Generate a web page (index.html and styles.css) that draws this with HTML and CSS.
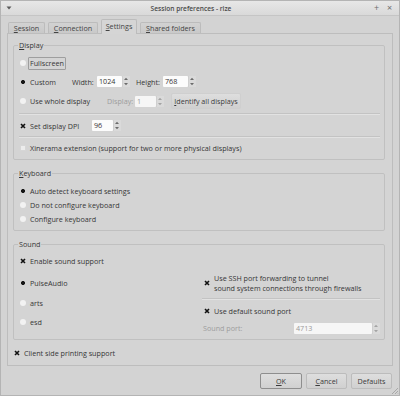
FILE: index.html
```html
<!DOCTYPE html>
<html>
<head>
    <meta charset="utf-8">
    <title>Session preferences - rize</title>
    <link rel="stylesheet" href="styles.css">
</head>
<body>
<div class="window">
    <div class="titlebar">
        <svg class="menu-btn" width="6" height="4" viewBox="0 0 6 4"><path d="M0.5 0.5H5.5L3 3.5Z" fill="#5a5a5a"/></svg>
        <span class="title">Session preferences - rize</span>
        <span class="wm-btn">+</span>
        <span class="wm-btn">×</span>
    </div>

    <div class="tabs">
        <span class="tab w37"><u>S</u>ession</span>
        <span class="tab w50"><u>C</u>onnection</span>
        <span class="tab active w36"><u>S</u>ettings</span>
        <span class="tab w61"><u>S</u>hared folders</span>
    </div>

    <div class="pane">
        <!-- 显示 -->
        <fieldset class="group display">
            <legend><u>D</u>isplay</legend>
            <div class="row h14">
                <span class="radio"></span><span class="focus">Fullscreen</span>
            </div>
            <div class="row h15">
                <span class="cell w52"><span class="radio on"></span>Custom</span>
                <span class="lbl w25">Width:</span>
                <span class="spin w33"><span class="spin-field">1024</span><span class="arrows"><svg width="8" height="11" viewBox="0 0 8 11"><path d="M2 4H6L4 1.8Z M2 7H6L4 9.2Z" fill="#6c6c6c"/></svg></span></span>
                <span class="lbl w27 ml6">Height:</span>
                <span class="spin w33"><span class="spin-field">768</span><span class="arrows"><svg width="8" height="11" viewBox="0 0 8 11"><path d="M2 4H6L4 1.8Z M2 7H6L4 9.2Z" fill="#6c6c6c"/></svg></span></span>
            </div>
            <div class="row h16">
                <span class="cell w87"><span class="radio"></span>Use whole display</span>
                <span class="lbl w28 off">Display:</span>
                <span class="spin w29 off"><span class="spin-field">1</span><span class="arrows"><svg width="8" height="11" viewBox="0 0 8 11"><path d="M2 4H6L4 1.8Z M2 7H6L4 9.2Z" fill="#a4a4a4"/></svg></span></span>
                <span class="button identify"><u>I</u>dentify all displays</span>
            </div>
            <div class="sep"></div>
            <div class="row h13">
                <span class="cell w72"><svg class="tick" width="6" height="6" viewBox="0 0 6 6"><path d="M1 1L5 5M5 1L1 5" stroke="#111" stroke-width="1.6"/></svg>Set display DPI</span>
                <span class="spin w29"><span class="spin-field">96</span><span class="arrows"><svg width="8" height="11" viewBox="0 0 8 11"><path d="M2 4H6L4 1.8Z M2 7H6L4 9.2Z" fill="#6c6c6c"/></svg></span></span>
            </div>
            <div class="sep"></div>
            <div class="row h12">
                <span class="box"></span>Xinerama extension (support for two or more physical displays)
            </div>
        </fieldset>

        <!-- 键盘 -->
        <fieldset class="group keyboard">
            <legend><u>K</u>eyboard</legend>
            <div class="row h12"><span class="radio on"></span>Auto detect keyboard settings</div>
            <div class="row h12"><span class="radio"></span>Do not configure keyboard</div>
            <div class="row h12"><span class="radio"></span>Configure keyboard</div>
        </fieldset>

        <!-- 声音 -->
        <fieldset class="group sound">
            <legend>Sound</legend>
            <div class="sound-body">
                <div class="sound-left">
                    <div class="row h12"><svg class="tick" width="6" height="6" viewBox="0 0 6 6"><path d="M1 1L5 5M5 1L1 5" stroke="#111" stroke-width="1.6"/></svg>Enable sound support</div>
                    <div class="row h12 mt10"><span class="radio on"></span>PulseAudio</div>
                    <div class="row h12 mt8"><span class="radio"></span>arts</div>
                    <div class="row h12 mt7"><span class="radio"></span>esd</div>
                </div>
                <div class="sound-right">
                    <div class="row indent"><svg class="tick" width="6" height="6" viewBox="0 0 6 6"><path d="M1 1L5 5M5 1L1 5" stroke="#111" stroke-width="1.6"/></svg><span class="two-lines">Use SSH port forwarding to tunnel<br>sound system connections through firewalls</span></div>
                    <div class="sep mt5"></div>
                    <div class="row h12 mt5 indent"><svg class="tick" width="6" height="6" viewBox="0 0 6 6"><path d="M1 1L5 5M5 1L1 5" stroke="#111" stroke-width="1.6"/></svg>Use default sound port</div>
                    <div class="row h12 mt5">
                        <span class="lbl off">Sound port:</span>
                        <span class="spin port off"><span class="spin-field">4713</span><span class="arrows"><svg width="8" height="11" viewBox="0 0 8 11"><path d="M2 4H6L4 1.8Z M2 7H6L4 9.2Z" fill="#a4a4a4"/></svg></span></span>
                    </div>
                </div>
            </div>
        </fieldset>

        <div class="row h12 printing"><svg class="tick" width="6" height="6" viewBox="0 0 6 6"><path d="M1 1L5 5M5 1L1 5" stroke="#111" stroke-width="1.6"/></svg>Client side printing support</div>
    </div>

    <div class="buttons">
        <span class="button default w42"><u>O</u>K</span>
        <span class="button w41"><u>C</u>ancel</span>
        <span class="button w41">Defaults</span>
    </div>

    <svg class="grip" width="8" height="8" viewBox="0 0 8 8"><path d="M7 1L1 7M7 4L4 7M7 6.5L6.5 7" stroke="#a8a8a8" stroke-width="1"/></svg>
</div>
</body>
</html>
```

FILE: styles.css
```css
* {
    margin: 0;
    padding: 0;
    box-sizing: border-box;
}
body {
    background: #d3d3d3;
    font-family: "Open Sans", "DejaVu Sans", sans-serif;
    font-size: 7.2px;
    color: #363636;
}
u {text-decoration: underline; text-underline-offset: 1px;}

/* 窗口外框 */
.window {
    position: relative;
    width: 400px;
    height: 396px;
    border: 1px solid #b4b4b4;
    display: flex;
    flex-direction: column;
}
.titlebar {
    height: 15px;
    flex: none;
    display: flex;
    align-items: center;
    padding: 0 3px 0 5px;
    background: linear-gradient(#e7e7e7, #d9d9d9);
    border-bottom: 1px solid #c5c5c5;
}
.titlebar .menu-btn {flex: none;}
.titlebar .title {
    flex: 1;
    text-align: center;
    font-weight: 600;
    font-size: 6.6px;
    color: #4a4a4a;
}
.titlebar .wm-btn {
    width: 13px;
    text-align: center;
    font-size: 9px;
    line-height: 10px;
    color: #6c6c6c;
}

/* 选项卡 */
.tabs {
    display: flex;
    align-items: flex-end;
    gap: 3px;
    height: 14px;
    margin: 3px 0 0 7px;
    flex: none;
}
.tab {
    height: 11px;
    line-height: 10px;
    text-align: center;
    white-space: nowrap;
    border: 1px solid #bcbcbc;
    border-bottom: none;
    border-radius: 2px 2px 0 0;
    background: linear-gradient(#d2d2d2, #c9c9c9);
    color: #444;
}
.tab.active {
    position: relative;
    z-index: 1;
    height: 15px;
    line-height: 12px;
    margin-bottom: -1px;
    background: #d5d5d5;
}
.w36 {width: 36px;}
.w37 {width: 37px;}
.w50 {width: 50px;}
.w61 {width: 61px;}

.pane {
    height: 333px;
    flex: none;
    margin: 0 6px;
    padding: 6px 7px 6px 5px;
    border: 1px solid #bdbdbd;
    background: #d4d4d4;
}

/* 分组框 */
.group {
    border: 1px solid #c0c0c0;
    border-radius: 2px;
    padding: 0 4px 5px 6px;
    min-width: 0;
}
.group legend {
    margin-left: -2px;
    padding: 0 1px;
    height: 10px;
    line-height: 10px;
}
.display {padding-top: 6px; display: flex; flex-direction: column; gap: 4px;}
.keyboard {margin-top: 8px; padding-top: 7px; display: flex; flex-direction: column; gap: 2px;}
.sound {margin-top: 8px;}

.row {display: flex; align-items: center; white-space: nowrap;}
.h12 {height: 12px;}
.h13 {height: 13px;}
.h14 {height: 14px;}
.h15 {height: 15px;}
.h16 {height: 16px;}
.mt5 {margin-top: 5px;}
.mt7 {margin-top: 7px;}
.mt8 {margin-top: 8px;}
.mt10 {margin-top: 10px;}
.ml6 {margin-left: 6px;}

.cell {display: flex; align-items: center; flex: none;}
.w25 {width: 25px;}
.w27 {width: 27px;}
.w28 {width: 28px;}
.w29 {width: 29px;}
.w33 {width: 33px;}
.w41 {width: 41px;}
.w42 {width: 42px;}
.w52 {width: 52px;}
.w72 {width: 72px;}
.w87 {width: 87px;}
.lbl {flex: none;}
.off {color: #9d9d9d;}

.sep {
    height: 2px;
    margin-left: -1px;
    border-top: 1px solid #c3c3c3;
    border-bottom: 1px solid #e2e2e2;
}

/* 单选框与复选框 */
.radio {
    flex: none;
    width: 6px;
    height: 6px;
    margin-right: 4px;
    border-radius: 50%;
    background: #f2f2f2;
}
.radio.on {background: radial-gradient(circle, #161616 0 1.7px, transparent 2.3px);}
.tick {flex: none; margin-right: 4px;}
.box {
    flex: none;
    width: 6px;
    height: 6px;
    margin-right: 4px;
    background: #ececec;
    border: 1px solid #d6d6d6;
}
.focus {
    height: 13px;
    line-height: 11px;
    margin-left: -2px;
    padding: 0 1px;
    border: 1px solid #9e9e9e;
    border-radius: 1px;
}

/* 数字输入框 */
.spin {display: flex; height: 11px; flex: none;}
.spin-field {
    flex: 1;
    padding-left: 2px;
    line-height: 11px;
    background: #fcfcfc;
    border-radius: 1px;
}
.spin .arrows {
    width: 8px;
    background: #dadada;
    border-left: 1px solid #cfcfcf;
}
.spin .arrows svg {display: block; margin-left: -1px;}
.spin.off .spin-field {background: #f6f6f6; color: #9a9a9a;}
.spin.port {width: 86px; margin-left: auto;}

.button {
    display: flex;
    align-items: center;
    justify-content: center;
    height: 16px;
    border: 1px solid #bcbcbc;
    border-radius: 2px;
    background: linear-gradient(#dedede, #d0d0d0);
    color: #3b3b3b;
}
.button.identify {width: 70px; margin-left: 7px; border-color: #cfcfcf;}
.button.default {border-color: #8e8e8e;}

/* 声音分组两栏 */
.sound-body {display: flex;}
.sound-left {width: 183px; padding-top: 6px; flex: none;}
.sound-right {flex: 1; margin-top: 24px;}
.indent {margin-left: 1px;}
.two-lines {line-height: 10px;}

.printing {margin: 7px 0 0 1px;}

.buttons {
    display: flex;
    justify-content: flex-end;
    gap: 4px;
    margin-top: 7px;
    padding-right: 7px;
}
.grip {position: absolute; right: 0; bottom: 0;}
```
